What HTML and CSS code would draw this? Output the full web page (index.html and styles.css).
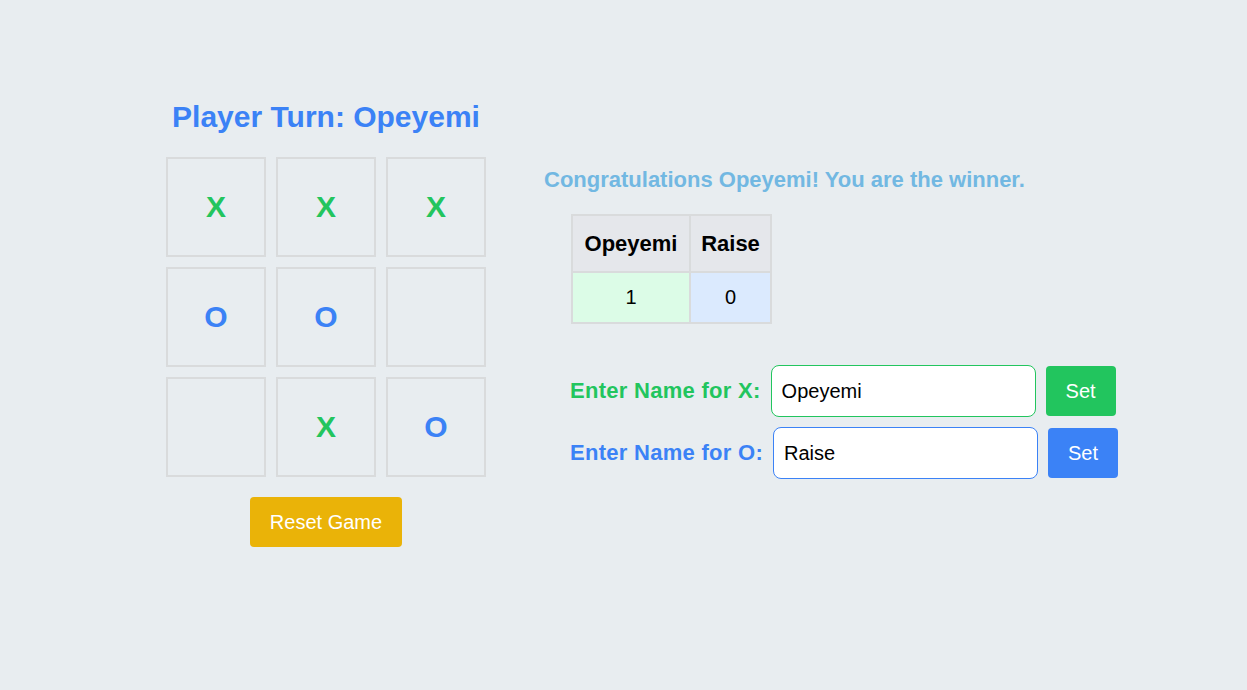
FILE: index.html
```html
<!DOCTYPE html>
<html lang="en">
<head>
<meta charset="utf-8">
<title>Tic Tac Toe</title>
<link rel="stylesheet" href="styles.css">
</head>
<body>
<main class="app">
  <section class="game">
    <h1 class="turn">Player Turn: Opeyemi</h1>
    <div class="board">
      <div class="cell x">X</div>
      <div class="cell x">X</div>
      <div class="cell x">X</div>
      <div class="cell o">O</div>
      <div class="cell o">O</div>
      <div class="cell"></div>
      <div class="cell"></div>
      <div class="cell x">X</div>
      <div class="cell o">O</div>
    </div>
    <button class="reset">Reset Game</button>
  </section>
  <section class="side">
    <p class="winner">Congratulations Opeyemi! You are the winner.</p>
    <div class="side-body">
      <table class="score">
        <colgroup>
          <col class="c1">
          <col class="c2">
        </colgroup>
        <thead>
          <tr><th>Opeyemi</th><th>Raise</th></tr>
        </thead>
        <tbody>
          <tr><td class="sx">1</td><td class="so">0</td></tr>
        </tbody>
      </table>
      <div class="names">
        <div class="name-row">
          <label class="label lx">Enter Name for X:</label>
          <input class="field fx" type="text" value="Opeyemi">
          <button class="set bx">Set</button>
        </div>
        <div class="name-row">
          <label class="label lo">Enter Name for O:</label>
          <input class="field fo" type="text" value="Raise">
          <button class="set bo">Set</button>
        </div>
      </div>
    </div>
  </section>
</main>
</body>
</html>
```
FILE: styles.css
```css
* { box-sizing: border-box; }
html, body {
  margin: 0;
  padding: 0;
  background: #e8edf0;
  font-family: "Liberation Sans", Arial, sans-serif;
}
.app {
  display: flex;
  align-items: center;
  padding: 99px 0 0 166px;
}
.game {
  width: 320px;
  display: flex;
  flex-direction: column;
  align-items: center;
}
.turn {
  margin: 0 0 23px;
  font-size: 30px;
  line-height: 35px;
  font-weight: bold;
  color: #3b82f6;
}
.board {
  display: grid;
  grid-template-columns: repeat(3, 100px);
  grid-auto-rows: 100px;
  gap: 10px;
}
.cell {
  border: 2px solid #d9dbdc;
  display: flex;
  align-items: center;
  justify-content: center;
  font-size: 30px;
  font-weight: bold;
}
.cell.x { color: #22c55e; }
.cell.o { color: #3b82f6; }
.reset {
  margin-top: 20px;
  height: 50px;
  padding: 0 20px;
  border: none;
  border-radius: 4px;
  background: #eab308;
  color: #fff;
  font-family: inherit;
  font-size: 20px;
}
.side {
  margin-left: 58px;
}
.winner {
  margin: 0 0 22px;
  font-size: 22px;
  line-height: 25px;
  font-weight: bold;
  color: #72b8e2;
}
.side-body {
  padding-left: 26px;
}
.score {
  border-collapse: collapse;
  table-layout: fixed;
  width: 199px;
  margin: 0 0 41px 1px;
}
.score .c1 { width: 118px; }
.score .c2 { width: 81px; }
.score th, .score td {
  border: 2px solid #d9dbdc;
  text-align: center;
  padding: 0;
  white-space: nowrap;
}
.score th {
  background: #e5e7eb;
  font-size: 22px;
  line-height: 25px;
  height: 57px;
  color: #000;
}
.score td {
  font-size: 20px;
  line-height: 23px;
  height: 51px;
  color: #000;
}
.score td.sx { background: #dcfce7; }
.score td.so { background: #dbeafe; }
.names {
  display: flex;
  flex-direction: column;
  gap: 10px;
}
.name-row {
  display: flex;
  align-items: center;
  gap: 10px;
}
.label {
  font-size: 22px;
  font-weight: bold;
  letter-spacing: 0.28px;
}
.lx { color: #22c55e; }
.lo { color: #3b82f6; }
.field {
  width: 265px;
  height: 52px;
  padding: 0 10px;
  border-radius: 8px;
  background: #fff;
  font-family: inherit;
  font-size: 20px;
  color: #000;
  outline: none;
}
.fx { border: 1px solid #22c55e; }
.fo { border: 1px solid #3b82f6; }
.set {
  width: 70px;
  height: 50px;
  border: none;
  border-radius: 4px;
  color: #fff;
  font-family: inherit;
  font-size: 20px;
}
.bx { background: #22c55e; }
.bo { background: #3b82f6; }
```
